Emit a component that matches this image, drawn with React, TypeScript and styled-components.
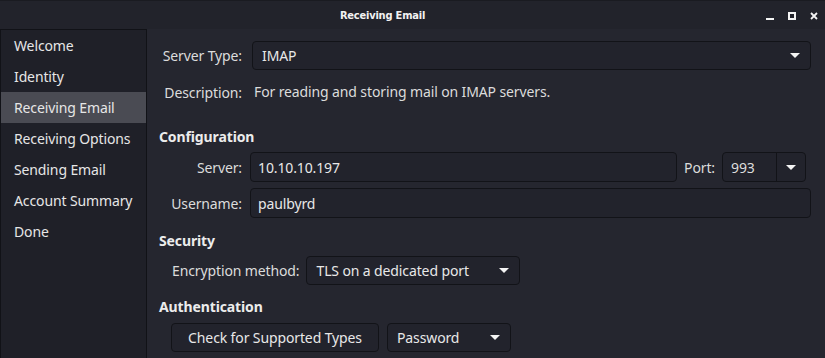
import React from "react";
import styled, { createGlobalStyle } from "styled-components";

const Global = createGlobalStyle`
  html, body { margin: 0; padding: 0; background: #25262f; }
  body { font-family: "Noto Sans", "DejaVu Sans", sans-serif; font-size: 14px; letter-spacing: -0.12px; color: #dcdcdc; }
  * { box-sizing: border-box; }
`;

const Window = styled.div`
  width: 825px;
  height: 358px;
  display: flex;
  flex-direction: column;
  background: #25262f;
  overflow: hidden;
`;

const TitleBar = styled.div`
  height: 29px;
  flex: none;
  display: flex;
  align-items: center;
  justify-content: center;
  padding-right: 60px;
  padding-top: 1px;
  position: relative;
  background: #22232b;
  border-top: 1px solid #1a1b21;
`;

const Title = styled.div`
  font-family: "DejaVu Sans Condensed", "DejaVu Sans", sans-serif;
  font-weight: bold;
  font-size: 11px;
  color: #f2f2f2;
  letter-spacing: -0.2px;
`;

const WinButtons = styled.div`
  position: absolute;
  right: 7px;
  top: 11px;
  display: flex;
  gap: 14px;
  align-items: flex-start;
`;

const Body = styled.div`
  flex: 1;
  display: flex;
  min-height: 0;
`;

const Sidebar = styled.div`
  width: 147px;
  flex: none;
  background: #1f2028;
  border-top: 1px solid #111217;
  border-right: 1px solid #111217;
  border-left: 1px solid #111217;
  display: flex;
  flex-direction: column;
`;

const SideItem = styled.div<{ $active?: boolean }>`
  height: 31px;
  display: flex;
  align-items: center;
  padding-left: 13px;
  color: #e6e6e6;
  background: ${(p) => (p.$active ? "#4a4b53" : "transparent")};
`;

const Main = styled.div`
  flex: 1;
  padding: 12px 14px 0 12px;
  display: flex;
  flex-direction: column;
`;

const TopGrid = styled.div`
  display: grid;
  grid-template-columns: 83px 1fr;
  column-gap: 10px;
  row-gap: 12px;
  align-items: center;
`;

const Label = styled.div`
  text-align: right;
  color: #dcdcdc;
  white-space: nowrap;
`;

const DescText = styled.div`
  padding-left: 2px;
  line-height: 20px;
`;

const Combo = styled.div<{ $width?: string }>`
  height: 29px;
  width: ${(p) => p.$width ?? "auto"};
  display: flex;
  align-items: center;
  justify-content: space-between;
  padding: 0 10px 0 9px;
  background: #22232c;
  border: 1px solid #121318;
  border-radius: 4px;
  color: #e8e8e8;
`;

const Arrow = styled.span`
  width: 0;
  height: 0;
  border-left: 5px solid transparent;
  border-right: 5px solid transparent;
  border-top: 5px solid #f4f4f4;
  display: inline-block;
`;

const Section = styled.div<{ $mt: number }>`
  margin-top: ${(p) => p.$mt}px;
  font-weight: bold;
  color: #ececec;
  line-height: 20px;
`;

const ConfigGrid = styled.div`
  margin-top: 5px;
  display: grid;
  grid-template-columns: 83px 1fr;
  column-gap: 8px;
  row-gap: 6px;
  align-items: center;
`;

const ServerRow = styled.div`
  display: flex;
  align-items: center;
  gap: 7px;
`;

const Input = styled.div`
  flex: 1;
  height: 30px;
  display: flex;
  align-items: center;
  padding: 0 7px;
  background: #22232c;
  border: 1px solid #121318;
  border-radius: 4px;
  color: #e8e8e8;
`;

const Spin = styled.div`
  width: 84px;
  height: 30px;
  display: flex;
  background: #22232c;
  border: 1px solid #121318;
  border-radius: 4px;
  margin-right: 5px;
`;

const SpinValue = styled.div`
  flex: 1;
  display: flex;
  align-items: center;
  padding-left: 8px;
  border-right: 1px solid #121318;
`;

const SpinButton = styled.div`
  width: 28px;
  display: flex;
  align-items: center;
  justify-content: center;
`;

const InlineRow = styled.div<{ $ml: number; $mt: number; $gap: number }>`
  margin-top: ${(p) => p.$mt}px;
  margin-left: ${(p) => p.$ml}px;
  display: flex;
  align-items: center;
  gap: ${(p) => p.$gap}px;
`;

const Button = styled.div`
  height: 29px;
  width: 208px;
  display: flex;
  align-items: center;
  justify-content: center;
  background: #22232c;
  border: 1px solid #121318;
  border-radius: 4px;
  color: #e8e8e8;
`;

const items = [
  "Welcome",
  "Identity",
  "Receiving Email",
  "Receiving Options",
  "Sending Email",
  "Account Summary",
  "Done",
];

export default function App() {
  return (
    <Window>
      <Global />
      <TitleBar>
        <Title>Receiving Email</Title>
        <WinButtons>
          <svg width="8" height="8" viewBox="0 0 8 8">
            <rect x="0" y="6" width="8" height="2" fill="#f4f4f4" />
          </svg>
          <svg width="8" height="8" viewBox="0 0 8 8">
            <rect x="1" y="1" width="6" height="6" fill="none" stroke="#f4f4f4" strokeWidth="2" />
          </svg>
          <svg width="8" height="8" viewBox="0 0 8 8">
            <path d="M1 1 L7 7 M7 1 L1 7" stroke="#f4f4f4" strokeWidth="1.8" />
          </svg>
        </WinButtons>
      </TitleBar>
      <Body>
        <Sidebar>
          {items.map((it) => (
            <SideItem key={it} $active={it === "Receiving Email"}>
              {it}
            </SideItem>
          ))}
        </Sidebar>
        <Main>
          <TopGrid>
            <Label>Server Type:</Label>
            <Combo>
              <span>IMAP</span>
              <Arrow />
            </Combo>
            <Label>Description:</Label>
            <DescText>For reading and storing mail on IMAP servers.</DescText>
          </TopGrid>
          <Section $mt={25}>Configuration</Section>
          <ConfigGrid>
            <Label>Server:</Label>
            <ServerRow>
              <Input>10.10.10.197</Input>
              <span>Port:</span>
              <Spin>
                <SpinValue>993</SpinValue>
                <SpinButton>
                  <Arrow />
                </SpinButton>
              </Spin>
            </ServerRow>
            <Label>Username:</Label>
            <Input>paulbyrd</Input>
          </ConfigGrid>
          <Section $mt={13}>Security</Section>
          <InlineRow $ml={13} $mt={5} $gap={7}>
            <span>Encryption method:</span>
            <Combo $width="214px">
              <span>TLS on a dedicated port</span>
              <Arrow />
            </Combo>
          </InlineRow>
          <Section $mt={12}>Authentication</Section>
          <InlineRow $ml={12} $mt={6} $gap={8}>
            <Button>Check for Supported Types</Button>
            <Combo $width="124px">
              <span>Password</span>
              <Arrow />
            </Combo>
          </InlineRow>
        </Main>
      </Body>
    </Window>
  );
}
